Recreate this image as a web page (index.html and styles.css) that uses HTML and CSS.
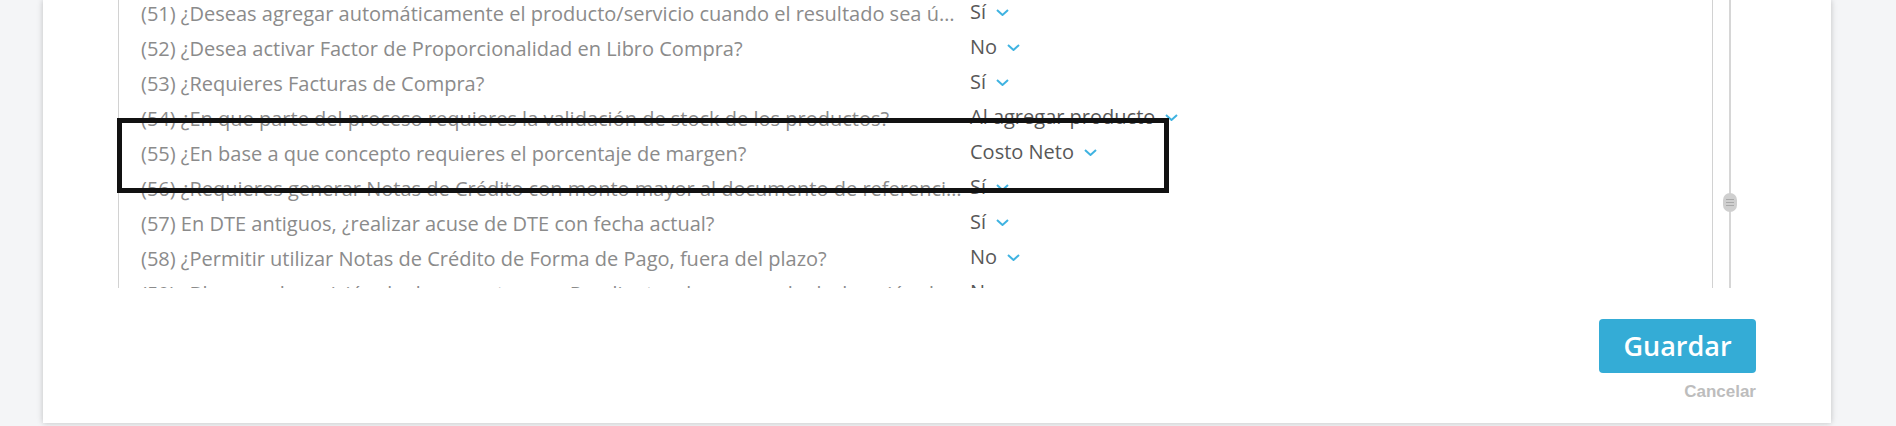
FILE: index.html
```html
<!DOCTYPE html>
<html lang="es">
<head>
<meta charset="utf-8">
<title>Configuración</title>
<link rel="stylesheet" href="styles.css">
</head>
<body>
<div class="page">
  <div class="card">
    <div class="list-wrap">
      <div class="list">
        <div class="rows">
          <div class="row"><span class="label">(51) ¿Deseas agregar automáticamente el producto/servicio cuando el resultado sea único?</span><span class="value">Sí<svg class="chev" viewBox="0 0 13 7"><polyline points="1,1 6.5,6 12,1"/></svg></span></div>
          <div class="row"><span class="label">(52) ¿Desea activar Factor de Proporcionalidad en Libro Compra?</span><span class="value">No<svg class="chev" viewBox="0 0 13 7"><polyline points="1,1 6.5,6 12,1"/></svg></span></div>
          <div class="row"><span class="label">(53) ¿Requieres Facturas de Compra?</span><span class="value">Sí<svg class="chev" viewBox="0 0 13 7"><polyline points="1,1 6.5,6 12,1"/></svg></span></div>
          <div class="row"><span class="label">(54) ¿En que parte del proceso requieres la validación de stock de los productos?</span><span class="value">Al agregar producto<svg class="chev" viewBox="0 0 13 7"><polyline points="1,1 6.5,6 12,1"/></svg></span></div>
          <div class="row"><span class="label">(55) ¿En base a que concepto requieres el porcentaje de margen?</span><span class="value">Costo Neto<svg class="chev" viewBox="0 0 13 7"><polyline points="1,1 6.5,6 12,1"/></svg></span></div>
          <div class="row"><span class="label">(56) ¿Requieres generar Notas de Crédito con monto mayor al documento de referencia?</span><span class="value">Sí<svg class="chev" viewBox="0 0 13 7"><polyline points="1,1 6.5,6 12,1"/></svg></span></div>
          <div class="row"><span class="label">(57) En DTE antiguos, ¿realizar acuse de DTE con fecha actual?</span><span class="value">Sí<svg class="chev" viewBox="0 0 13 7"><polyline points="1,1 6.5,6 12,1"/></svg></span></div>
          <div class="row"><span class="label">(58) ¿Permitir utilizar Notas de Crédito de Forma de Pago, fuera del plazo?</span><span class="value">No<svg class="chev" viewBox="0 0 13 7"><polyline points="1,1 6.5,6 12,1"/></svg></span></div>
          <div class="row"><span class="label">(59) ¿Bloquear la emisión de documentos con Pendientes de pago en la declaración de impuestos?</span><span class="value">No<svg class="chev" viewBox="0 0 13 7"><polyline points="1,1 6.5,6 12,1"/></svg></span></div>
        </div>
      </div>
      <div class="scroll">
        <div class="track"></div>
        <div class="thumb"><i></i><i></i><i></i></div>
      </div>
    </div>
    <div class="footer">
      <button class="btn-save" type="button">Guardar</button>
      <a class="cancel" href="#">Cancelar</a>
    </div>
  </div>
  <div class="highlight"></div>
</div>
</body>
</html>
```

FILE: styles.css
```css
html, body {
  margin: 0;
  padding: 0;
}
body {
  background: #f4f5f7;
  font-family: "Open Sans", "Liberation Sans", sans-serif;
  overflow: hidden;
}
.page {
  position: relative;
  height: 426px;
}
.card {
  margin-left: 43px;
  width: 1788px;
  height: 423px;
  box-sizing: border-box;
  background: #fff;
  box-shadow: 0 0 6px rgba(0, 0, 0, 0.22);
  padding: 0 75px;
}
.list-wrap {
  display: flex;
  height: 288px;
  margin-right: 19px;
  gap: 10px;
}
.list {
  flex: 1;
  border-left: 1px solid #d2d2d2;
  border-right: 1px solid #d2d2d2;
  overflow: hidden;
  padding-left: 22px;
}
.rows {
  margin-top: -4.5px;
}
.row {
  display: flex;
  align-items: flex-start;
  height: 35px;
}
.label {
  width: 821px;
  margin-right: 8px;
  flex: none;
  font-size: 20px;
  line-height: 35px;
  color: #8b8b8b;
  white-space: nowrap;
  overflow: hidden;
  text-overflow: ellipsis;
}
.value {
  display: flex;
  align-items: center;
  font-size: 20px;
  line-height: 31px;
  color: #585858;
  white-space: nowrap;
}
.chev {
  width: 13px;
  height: 7px;
  margin-left: 10px;
  margin-top: 2px;
  fill: none;
  stroke: #3fb3e1;
  stroke-width: 2;
}
.scroll {
  position: relative;
  width: 14px;
  display: flex;
  justify-content: center;
}
.track {
  width: 2px;
  height: 100%;
  background: #d6d6d6;
}
.thumb {
  position: absolute;
  left: 0;
  top: 193px;
  width: 14px;
  height: 19px;
  border-radius: 7px;
  background: #cfcfcf;
  display: flex;
  flex-direction: column;
  align-items: center;
  justify-content: center;
  gap: 2px;
}
.thumb i {
  display: block;
  width: 8px;
  height: 1px;
  background: #a9a9a9;
}
.footer {
  display: flex;
  flex-direction: column;
  align-items: flex-end;
  padding-top: 31px;
}
.btn-save {
  height: 54px;
  width: 157px;
  border: none;
  border-radius: 4px;
  background: #34acd6;
  color: #fff;
  font-family: "Open Sans", sans-serif;
  font-weight: 600;
  font-size: 27px;
  line-height: 54px;
  padding: 0;
}
.cancel {
  margin-top: 9px;
  font-family: "Liberation Sans", Arial, sans-serif;
  font-weight: 700;
  font-size: 17px;
  line-height: 20px;
  color: #bdbdbd;
  text-decoration: none;
}
.highlight {
  position: absolute;
  left: 117px;
  top: 118px;
  width: 1052px;
  height: 75px;
  box-sizing: border-box;
  border: 5px solid #111;
}
```
